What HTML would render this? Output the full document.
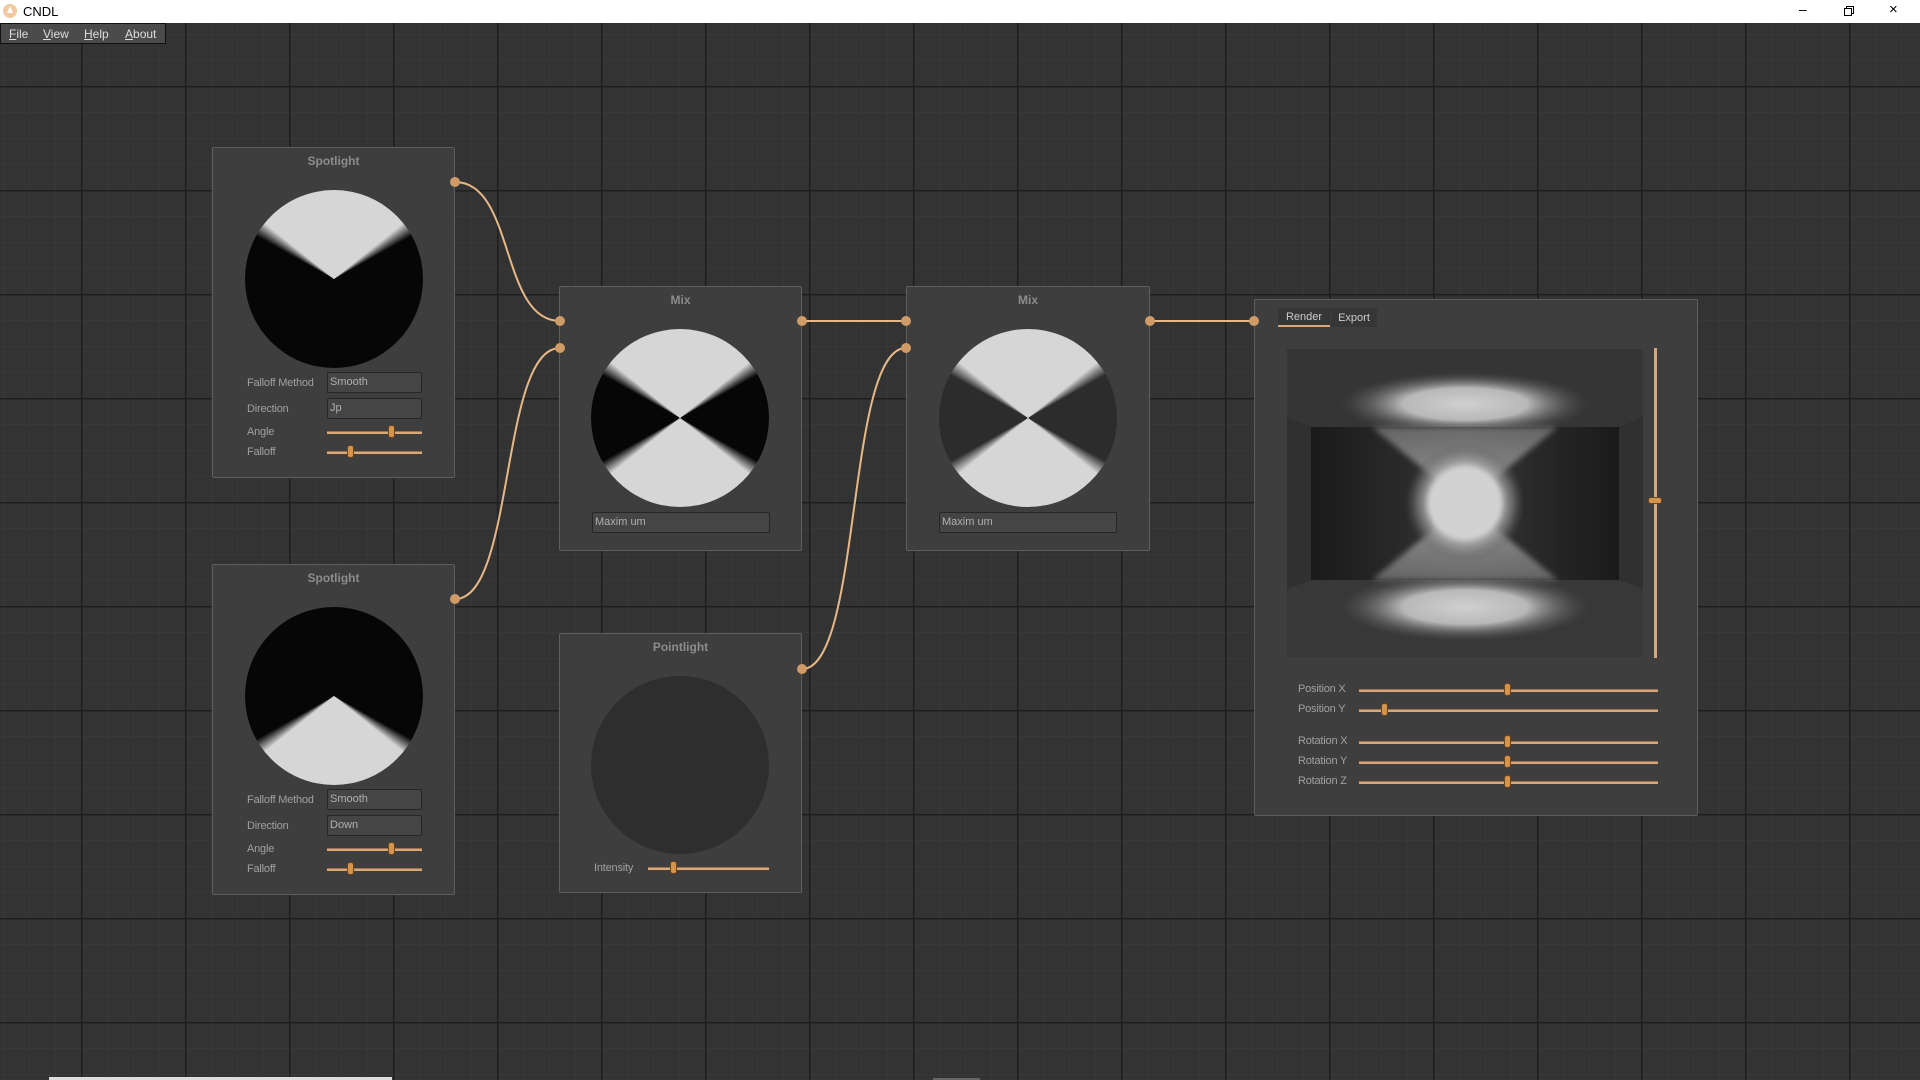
<!DOCTYPE html>
<html><head><meta charset="utf-8"><style>
*{margin:0;padding:0;box-sizing:border-box}
body{width:1920px;height:1080px;overflow:hidden;font-family:"Liberation Sans",sans-serif;background:#fff;position:relative}
#title{position:absolute;left:0;top:0;width:1920px;height:23px;background:#fff;font-size:13px;color:#000}
#canvas{position:absolute;left:0;top:23px;width:1920px;height:1057px;background-color:#333;
background-image:linear-gradient(#1f1f1f 0 1.5px,transparent 1.5px),linear-gradient(90deg,#1f1f1f 0 1.5px,transparent 1.5px),linear-gradient(#383838 0 1px,transparent 1px),linear-gradient(90deg,#383838 0 1px,transparent 1px);
background-size:104px 104px,104px 104px,26px 26px,26px 26px;background-position:81px 63px,81px 63px,3px 11px,3px 11px}
#menu{position:absolute;left:0;top:23px;width:166px;height:21px;background:#4b4b4b;border:1px solid #111;font-size:12px;color:#ddd}
#menu span{position:absolute;top:3px}
.node{position:absolute;background:#3e3e3e;border:1px solid #5e5e5e;border-radius:2px}
.nt{position:absolute;left:0;right:0;text-align:center;font-weight:bold;font-size:12px;color:#8c8c8c}
.circ{position:absolute;width:178px;height:178px;border-radius:50%}
.lbl{position:absolute;font-size:11px;color:#a0a0a0;letter-spacing:-0.2px}
.inp{position:absolute;height:21px;background:#454545;border:1px solid #262626;border-radius:2px;font-size:11px;color:#b0b0b0;padding:3px 2px}
.trk{position:absolute;height:3px;background:#d8a878;border-top:1px solid #9a7350}
.hnd{position:absolute;width:7px;height:13px;background:#d4944c;border:1px solid #6a4520;border-radius:3px}
</style></head><body>
<div id="title">
<svg style="position:absolute;left:2px;top:3px" width="16" height="16"><circle cx="8" cy="8" r="7" fill="#f2c9a0"/><path d="M8 3 L5 10 H11Z" fill="#fff"/></svg>
<span style="position:absolute;left:23px;top:4px">CNDL</span>
<span style="position:absolute;left:1799px;top:1px;font-size:14px">&#8211;</span>
<svg style="position:absolute;left:1843px;top:5px" width="12" height="12"><rect x="1.5" y="3.5" width="7" height="7" fill="none" stroke="#000"/><path d="M3.5 3.5V1.5H10.5V8.5H8.5" fill="none" stroke="#000"/></svg>
<span style="position:absolute;left:1889px;top:1px;font-size:15px">&#215;</span>
</div>
<div id="canvas"></div>
<div id="menu"><span style="left:8px"><u>F</u>ile</span><span style="left:42px"><u>V</u>iew</span><span style="left:83px"><u>H</u>elp</span><span style="left:124px"><u>A</u>bout</span></div>

<div class="node" style="left:212px;top:147px;width:243px;height:331px">
<div class="nt" style="top:6px">Spotlight</div>
<div class="circ" style="left:32px;top:42px;background:conic-gradient(#d6d6d6 0deg 51deg,#060606 61deg 299deg,#d6d6d6 309deg)"></div>
<div class="lbl" style="left:34px;top:229px">Falloff Method</div>
<div class="inp" style="left:114px;top:224px;width:95px">Smooth</div>
<div class="lbl" style="left:34px;top:255px">Direction</div>
<div class="inp" style="left:114px;top:250px;width:95px">Jp</div>
<div class="lbl" style="left:34px;top:278px">Angle</div>
<div class="trk" style="left:114px;top:283px;width:95px"></div><div class="hnd" style="left:175px;top:277px"></div>
<div class="lbl" style="left:34px;top:298px">Falloff</div>
<div class="trk" style="left:114px;top:303px;width:95px"></div><div class="hnd" style="left:134px;top:297px"></div>
</div>

<div class="node" style="left:212px;top:564px;width:243px;height:331px">
<div class="nt" style="top:6px">Spotlight</div>
<div class="circ" style="left:32px;top:42px;background:conic-gradient(#060606 0deg 119deg,#d6d6d6 129deg 231deg,#060606 241deg)"></div>
<div class="lbl" style="left:34px;top:229px">Falloff Method</div>
<div class="inp" style="left:114px;top:224px;width:95px">Smooth</div>
<div class="lbl" style="left:34px;top:255px">Direction</div>
<div class="inp" style="left:114px;top:250px;width:95px">Down</div>
<div class="lbl" style="left:34px;top:278px">Angle</div>
<div class="trk" style="left:114px;top:283px;width:95px"></div><div class="hnd" style="left:175px;top:277px"></div>
<div class="lbl" style="left:34px;top:298px">Falloff</div>
<div class="trk" style="left:114px;top:303px;width:95px"></div><div class="hnd" style="left:134px;top:297px"></div>
</div>

<div class="node" style="left:559px;top:286px;width:243px;height:265px">
<div class="nt" style="top:6px">Mix</div>
<div class="circ" style="left:31px;top:42px;background:conic-gradient(#d6d6d6 0deg 51deg,#060606 61deg 119deg,#d6d6d6 129deg 231deg,#060606 241deg 299deg,#d6d6d6 309deg)"></div>
<div class="inp" style="left:32px;top:225px;width:178px">Maxim um</div>
</div>

<div class="node" style="left:906px;top:286px;width:244px;height:265px">
<div class="nt" style="top:6px">Mix</div>
<div class="circ" style="left:32px;top:42px;background:conic-gradient(#d6d6d6 0deg 51deg,#2c2c2c 61deg 119deg,#d6d6d6 129deg 231deg,#2c2c2c 241deg 299deg,#d6d6d6 309deg)"></div>
<div class="inp" style="left:32px;top:225px;width:178px">Maxim um</div>
</div>

<div class="node" style="left:559px;top:633px;width:243px;height:260px">
<div class="nt" style="top:6px">Pointlight</div>
<div class="circ" style="left:31px;top:42px;background:#2e2e2e"></div>
<div class="lbl" style="left:34px;top:228px">Intensity</div>
<div class="trk" style="left:88px;top:233px;width:121px"></div><div class="hnd" style="left:110px;top:227px"></div>
</div>

<div class="node" style="left:1254px;top:299px;width:444px;height:517px">
<div style="position:absolute;left:23px;top:8px;width:52px;height:19px;background:#363636;border-bottom:2px solid #d8a878;font-size:11px;color:#ccc;text-align:center;padding-top:3px">Render</div>
<div style="position:absolute;left:76px;top:8px;width:46px;height:19px;background:#363636;font-size:11px;color:#ccc;text-align:center;padding-top:4px">Export</div>
<svg style="position:absolute;left:32px;top:49px" width="356" height="308">
<defs>
<radialGradient id="el" cx="0.5" cy="0.5" r="0.5"><stop offset="0" stop-color="#d0d0d0"/><stop offset="0.5" stop-color="#b8b8b8"/><stop offset="1" stop-color="#555" stop-opacity="0"/></radialGradient>
<radialGradient id="cg" cx="0.5" cy="0.5" r="0.5"><stop offset="0" stop-color="#cfcfcf"/><stop offset="0.55" stop-color="#cfcfcf"/><stop offset="0.8" stop-color="#888" stop-opacity="0.6"/><stop offset="1" stop-color="#555" stop-opacity="0"/></radialGradient>
<linearGradient id="wl" x1="0" x2="1"><stop offset="0" stop-color="#1a1a1a"/><stop offset="0.3" stop-color="#2a2a2a"/><stop offset="0.5" stop-color="#3a3a3a"/><stop offset="0.7" stop-color="#2a2a2a"/><stop offset="1" stop-color="#1a1a1a"/></linearGradient>
<linearGradient id="cu" x1="0" y1="0" x2="0" y2="1"><stop offset="0" stop-color="#7a7a7a"/><stop offset="1" stop-color="#bdbdbd"/></linearGradient>
<linearGradient id="cd" x1="0" y1="1" x2="0" y2="0"><stop offset="0" stop-color="#7a7a7a"/><stop offset="1" stop-color="#bdbdbd"/></linearGradient>
<filter id="b"><feGaussianBlur stdDeviation="3"/></filter>
</defs>
<rect width="356" height="308" fill="#303030"/>
<polygon points="0,0 356,0 356,68 332,78 24,78 0,68" fill="#353535"/>
<polygon points="0,308 356,308 356,240 332,231 24,231 0,240" fill="#383838"/>
<ellipse cx="178" cy="55" rx="125" ry="32" fill="url(#el)"/>
<ellipse cx="178" cy="258" rx="125" ry="34" fill="url(#el)"/>
<rect x="24" y="78" width="308" height="153" fill="url(#wl)"/>
<polygon points="85,78 271,78 178,154" fill="url(#cu)" filter="url(#b)" opacity="0.75"/>
<polygon points="85,231 271,231 178,154" fill="url(#cd)" filter="url(#b)" opacity="0.75"/>
<ellipse cx="178" cy="154" rx="60" ry="60" fill="url(#cg)"/>
<circle cx="178" cy="154" r="36" fill="#d2d2d2" filter="url(#b)"/>
</svg>
<div style="position:absolute;left:399px;top:48px;width:3px;height:310px;background:#d8a878"></div>
<div style="position:absolute;left:393px;top:197px;width:14px;height:7px;background:#d4944c;border:1px solid #6a4520;border-radius:3px"></div>
<div class="lbl" style="left:43px;top:383px">Position X</div><div class="trk" style="left:104px;top:389px;width:299px"></div><div class="hnd" style="left:249px;top:383px"></div>
<div class="lbl" style="left:43px;top:403px">Position Y</div><div class="trk" style="left:104px;top:409px;width:299px"></div><div class="hnd" style="left:126px;top:403px"></div>
<div class="lbl" style="left:43px;top:435px">Rotation X</div><div class="trk" style="left:104px;top:441px;width:299px"></div><div class="hnd" style="left:249px;top:435px"></div>
<div class="lbl" style="left:43px;top:455px">Rotation Y</div><div class="trk" style="left:104px;top:461px;width:299px"></div><div class="hnd" style="left:249px;top:455px"></div>
<div class="lbl" style="left:43px;top:475px">Rotation Z</div><div class="trk" style="left:104px;top:481px;width:299px"></div><div class="hnd" style="left:249px;top:475px"></div>
</div>

<svg style="position:absolute;left:0;top:0" width="1920" height="1080">
<g fill="none" stroke="#e6b888" stroke-width="2">
<path d="M455 182 C515 182 500 321 560 321"/>
<path d="M455 599 C515 599 500 348 560 348"/>
<path d="M802 321 H906"/>
<path d="M802 669 C862 669 846 348 906 348"/>
<path d="M1150 321 H1254"/>
</g>
<g fill="#cf9c68">
<circle cx="455" cy="182" r="5"/><circle cx="455" cy="599" r="5"/>
<circle cx="560" cy="321" r="5"/><circle cx="560" cy="348" r="5"/><circle cx="802" cy="321" r="5"/>
<circle cx="906" cy="321" r="5"/><circle cx="906" cy="348" r="5"/><circle cx="1150" cy="321" r="5"/>
<circle cx="802" cy="669" r="5"/><circle cx="1254" cy="321" r="5"/>
</g>
<rect x="49" y="1077" width="343" height="3" fill="#ddd"/>
<rect x="933" y="1078" width="47" height="2" fill="#666"/>
</svg>
</body></html>
